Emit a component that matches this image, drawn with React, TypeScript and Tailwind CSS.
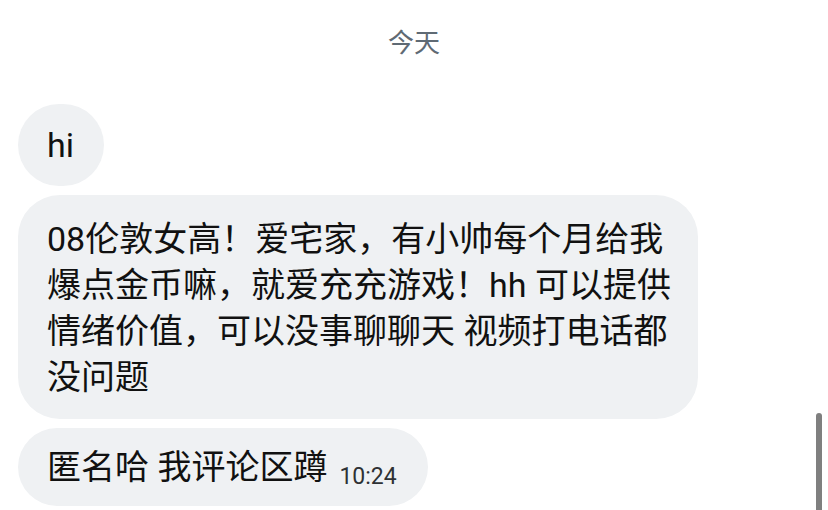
import React from "react";

const font = { fontFamily: '"Roboto", "Noto Sans CJK SC", sans-serif' };

export default function App() {
  return (
    <div
      className="relative w-[828px] h-[510px] overflow-hidden bg-white"
      style={font}
    >
      <div className="flex flex-col pt-[26px]">
        <div className="text-center text-[26px] leading-[34px] text-[#5f6a74]">今天</div>
        <div className="flex flex-col items-start gap-[9px] pl-[18px] mt-[44px]">
          <div className="rounded-full bg-[#eff1f3] pl-[29px] pr-[30px] py-[18px] text-[34px] leading-[46px] text-[#111]">
            hi
          </div>
          <div className="w-[680px] rounded-[42px] bg-[#eff1f3] pl-[29px] pr-[20px] pt-[21px] pb-[19px] text-[34px] leading-[46px] text-[#111] whitespace-nowrap">
            <div>08伦敦女高！爱宅家，有小帅每个月给我</div>
            <div>爆点金币嘛，就爱充充游戏！hh 可以提供</div>
            <div>情绪价值，可以没事聊聊天 视频打电话都</div>
            <div>没问题</div>
          </div>
          <div className="flex items-end rounded-full bg-[#eff1f3] pl-[29px] pr-[31px] pt-[16px] pb-[16px] text-[#111] whitespace-nowrap">
            <span className="text-[34px] leading-[46px]">匿名哈 我评论区蹲</span>
            <span className="ml-[12px] mb-[-1px] text-[23px] leading-[28px] text-[#2e3134]">10:24</span>
          </div>
        </div>
      </div>
      <div className="absolute right-[6px] top-[413px] w-[6px] h-[110px] rounded-t-full bg-[#7f7f7f]" />
    </div>
  );
}
